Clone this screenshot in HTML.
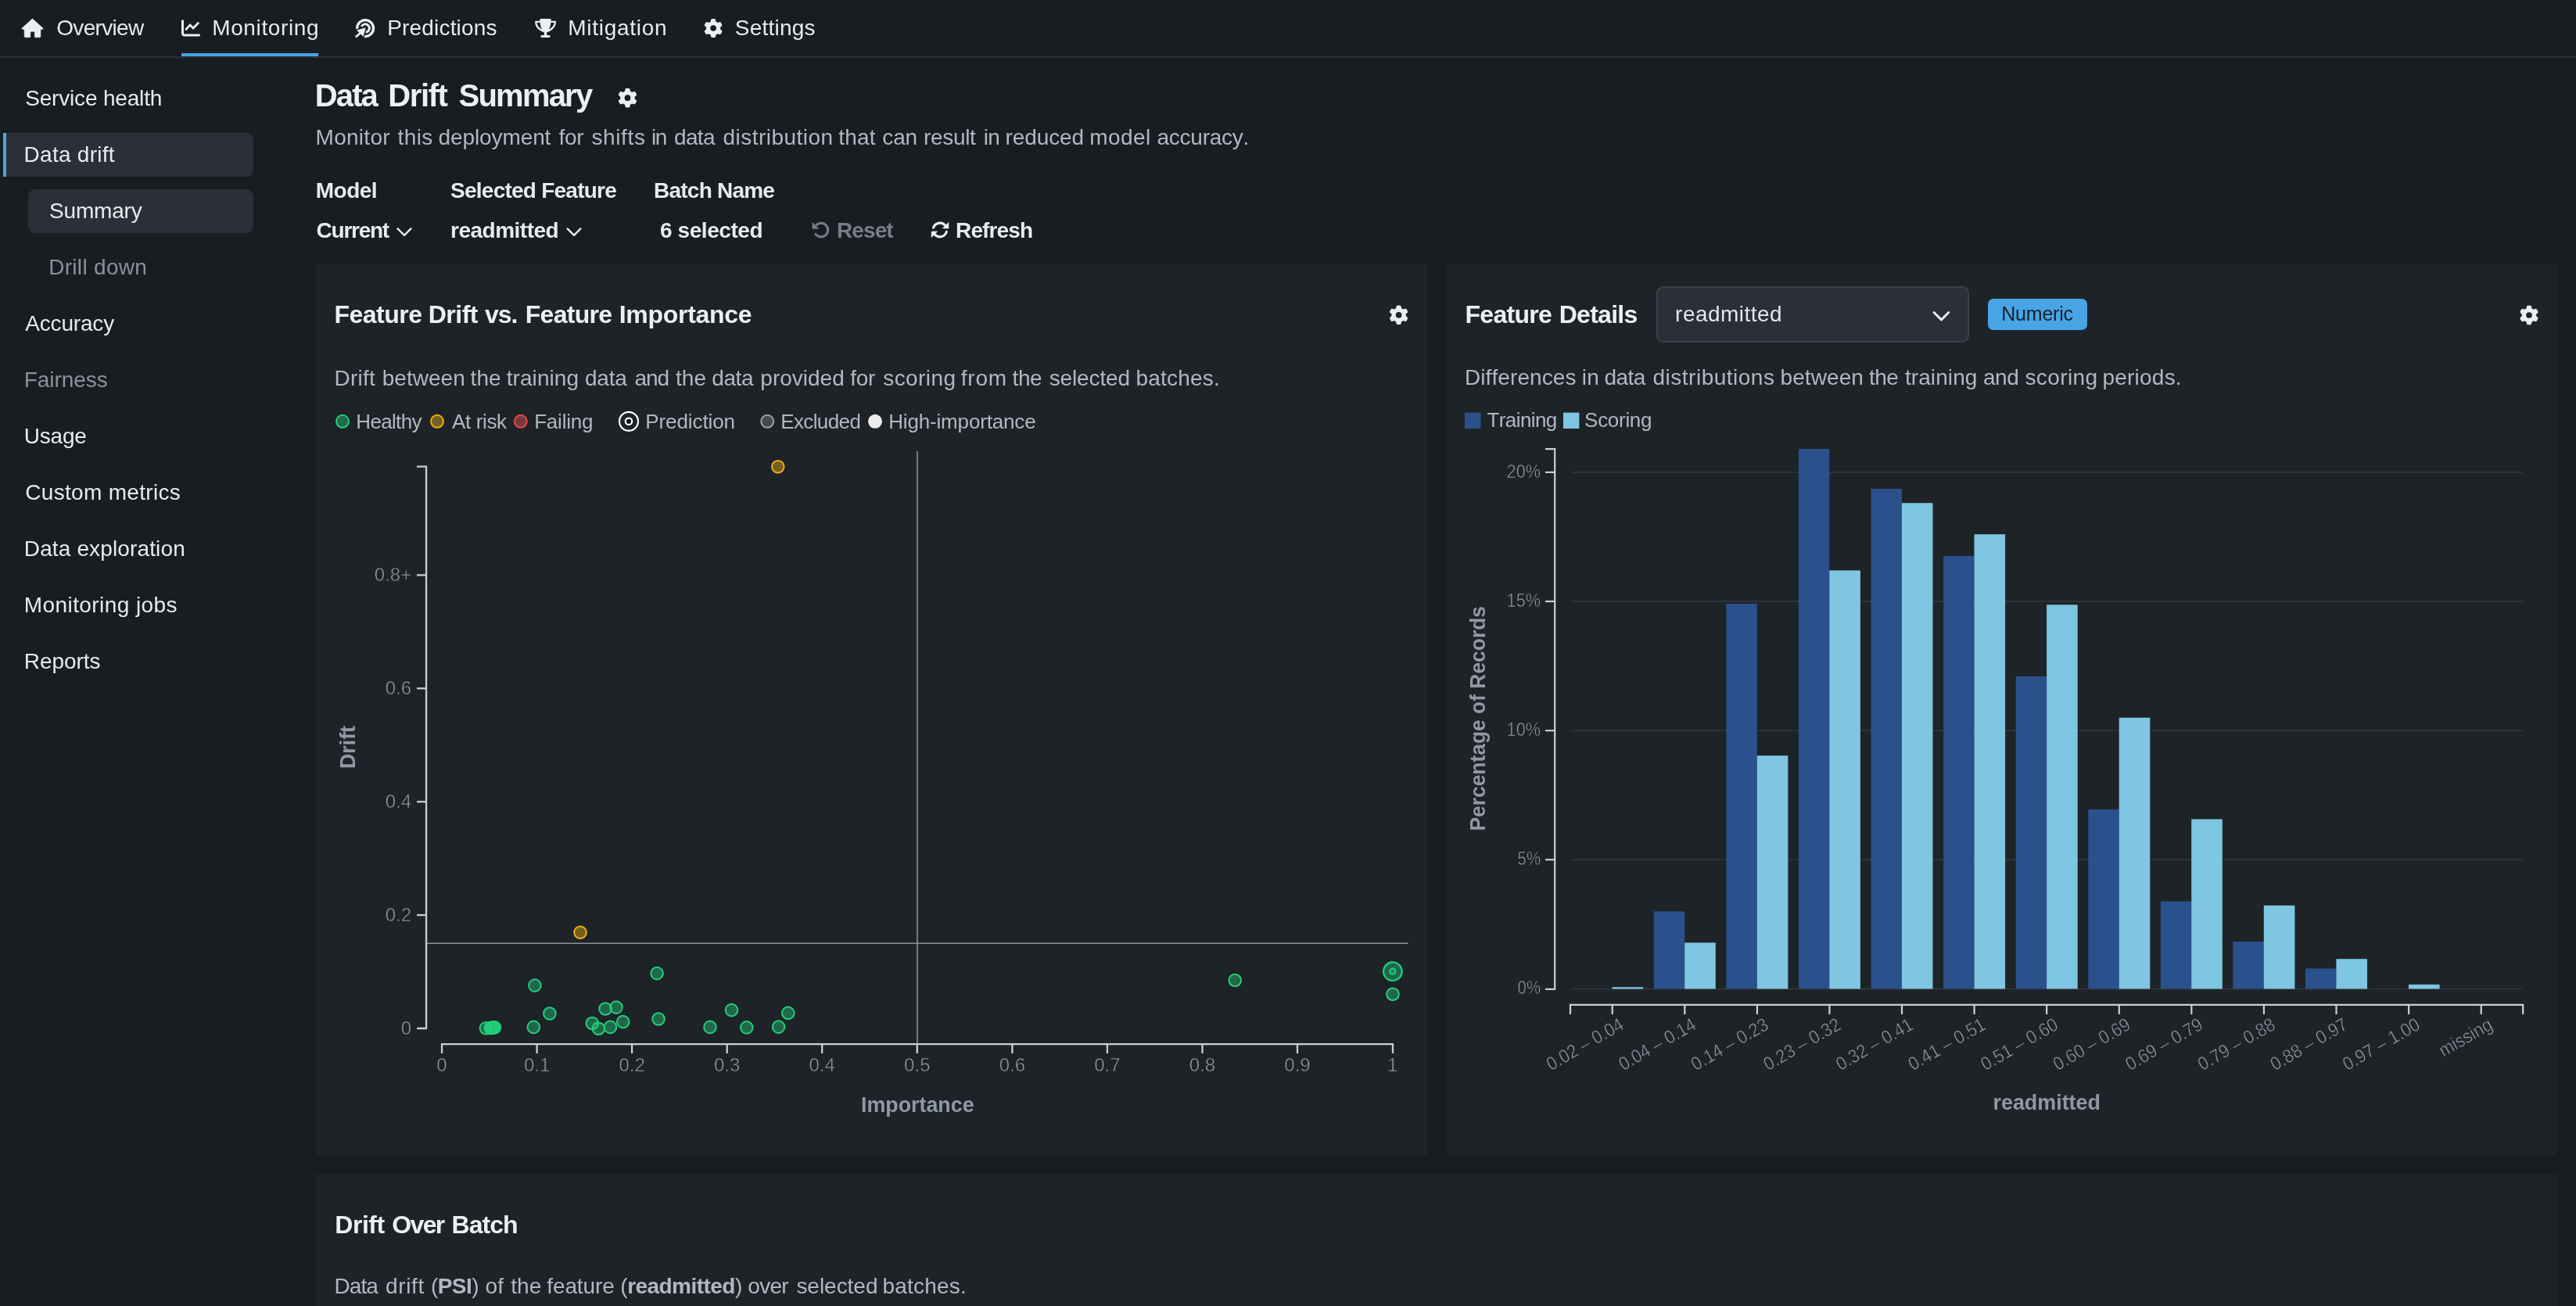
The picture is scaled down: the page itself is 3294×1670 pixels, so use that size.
<!DOCTYPE html>
<html lang="en">
<head>
<meta charset="utf-8">
<title>Data Drift Summary</title>
<style>
html,body{margin:0;padding:0;background:#181d21;}
body{width:3294px;height:1670px;overflow:hidden;position:relative;font-family:"Liberation Sans", sans-serif;}
.t{position:absolute;white-space:nowrap;line-height:1;font-kerning:none;}
.t b{font-weight:700;}
.ln{margin:0;padding:0;font-size:inherit;font-weight:inherit;}
nav,aside,main,section,header{position:absolute;display:block;left:0;top:0;}
nav,aside,main{will-change:transform;}
nav{left:0;top:0;width:3294px;height:72px;border-bottom:2px solid #2b3039;}
.underline{position:absolute;left:232px;top:68px;width:175px;height:4.4px;background:#4aa3e4;}
.sel1{position:absolute;left:8px;top:170px;width:316px;height:56px;background:#2a2f38;border-radius:0 9px 9px 0;}
.selbar{position:absolute;left:4px;top:170px;width:4.4px;height:56px;background:#4aa3e4;}
.sel2{position:absolute;left:36px;top:242px;width:288px;height:56px;background:#2a2f38;border-radius:9px;}
.panel{position:absolute;background:#1e2327;}
#p1{left:404px;top:337px;width:1420.6px;height:1140px;}
#p2{left:1849px;top:337px;width:1421px;height:1140px;}
#p3{left:404px;top:1501px;width:2866px;height:200px;}
.select{position:absolute;left:2117.6px;top:366.2px;width:396px;height:67.6px;border:2px solid #3b414b;border-radius:9px;background:#2a2f38;}
.badge{position:absolute;left:2541.6px;top:382px;width:127.4px;height:39.8px;border-radius:7px;background:#47a5e6;}
svg{position:absolute;left:0;top:0;overflow:visible;}
svg text{font-family:"Liberation Sans", sans-serif;}
.tk{font-size:24px;fill:#9299a4;stroke:#1e2327;stroke-width:0.55px;}
.axl{font-size:28px;font-weight:700;fill:#9198a5;}
</style>
</head>
<body>
<nav>
<div class="underline"></div>
<span id="t0" class="t" style="left:72.20px;top:21.8px;font-size:28px;color:#e8eaed;letter-spacing:-0.663px">Overview</span>
<span id="t1" class="t" style="left:271.20px;top:21.8px;font-size:28px;color:#e8eaed;letter-spacing:0.627px">Monitoring</span>
<span id="t2" class="t" style="left:495.15px;top:21.8px;font-size:28px;color:#e8eaed;letter-spacing:0.187px">Predictions</span>
<span id="t3" class="t" style="left:726.20px;top:21.8px;font-size:28px;color:#e8eaed;letter-spacing:0.736px">Mitigation</span>
<span id="t4" class="t" style="left:939.72px;top:21.8px;font-size:28px;color:#e8eaed;letter-spacing:0.236px">Settings</span>
</nav>
<aside>
<div class="selbar"></div><div class="sel1"></div><div class="sel2"></div>
<span id="t5" class="t" style="left:32.20px;top:111.8px;font-size:28px;color:#e8eaed;letter-spacing:-0.177px">Service health</span>
<span id="t6" class="t" style="left:30.58px;top:183.8px;font-size:28px;color:#e8eaed;letter-spacing:0.259px">Data drift</span>
<span id="t7" class="t" style="left:63.10px;top:255.8px;font-size:28px;color:#e8eaed;letter-spacing:-0.200px">Summary</span>
<span id="t8" class="t" style="left:62.20px;top:327.8px;font-size:28px;color:#8b919c;letter-spacing:0.306px">Drill down</span>
<span id="t9" class="t" style="left:32.30px;top:399.8px;font-size:28px;color:#e8eaed;letter-spacing:-0.182px">Accuracy</span>
<span id="t10" class="t" style="left:30.77px;top:471.8px;font-size:28px;color:#8b919c;letter-spacing:-0.063px">Fairness</span>
<span id="t11" class="t" style="left:30.77px;top:543.8px;font-size:28px;color:#e8eaed;letter-spacing:-0.210px">Usage</span>
<span id="t12" class="t" style="left:32.30px;top:615.8px;font-size:28px;color:#e8eaed;letter-spacing:0.305px">Custom metrics</span>
<span id="t13" class="t" style="left:30.77px;top:687.8px;font-size:28px;color:#e8eaed;letter-spacing:0.139px">Data exploration</span>
<span id="t14" class="t" style="left:30.77px;top:759.8px;font-size:28px;color:#e8eaed;letter-spacing:0.421px">Monitoring jobs</span>
<span id="t15" class="t" style="left:30.77px;top:831.8px;font-size:28px;color:#e8eaed;letter-spacing:-0.051px">Reports</span>
</aside>
<main>
<header>
<h1 class="ln" id="ln-h1">
<span id="t16" class="t" style="left:402.86px;top:101.6px;font-size:40px;color:#eeeff1;letter-spacing:-1.926px;font-weight:700">Data</span>
<span id="t17" class="t" style="left:496.20px;top:101.6px;font-size:40px;color:#eeeff1;letter-spacing:-1.364px;font-weight:700">Drift</span>
<span id="t18" class="t" style="left:586.60px;top:101.6px;font-size:40px;color:#eeeff1;letter-spacing:-1.795px;font-weight:700">Summary</span>
</h1>
<p class="ln" id="ln-sub">
<span id="t19" class="t" style="left:403.58px;top:162.3px;font-size:28px;color:#b1b8c3;letter-spacing:0.276px">Monitor</span>
<span id="t20" class="t" style="left:508.50px;top:162.3px;font-size:28px;color:#b1b8c3;letter-spacing:0.430px">this</span>
<span id="t21" class="t" style="left:560.53px;top:162.3px;font-size:28px;color:#b1b8c3;letter-spacing:-0.097px">deployment</span>
<span id="t22" class="t" style="left:714.50px;top:162.3px;font-size:28px;color:#b1b8c3;letter-spacing:-0.329px">for</span>
<span id="t23" class="t" style="left:756.40px;top:162.3px;font-size:28px;color:#b1b8c3;letter-spacing:0.627px">shifts</span>
<span id="t24" class="t" style="left:833.10px;top:162.3px;font-size:28px;color:#b1b8c3;letter-spacing:-1.498px">in</span>
<span id="t25" class="t" style="left:861.91px;top:162.3px;font-size:28px;color:#b1b8c3;letter-spacing:-0.600px">data</span>
<span id="t26" class="t" style="left:924.50px;top:162.3px;font-size:28px;color:#b1b8c3;letter-spacing:0.463px">distribution</span>
<span id="t27" class="t" style="left:1072.20px;top:162.3px;font-size:28px;color:#b1b8c3;letter-spacing:0.174px">that</span>
<span id="t28" class="t" style="left:1128.29px;top:162.3px;font-size:28px;color:#b1b8c3;letter-spacing:-0.132px">can</span>
<span id="t29" class="t" style="left:1180.91px;top:162.3px;font-size:28px;color:#b1b8c3;letter-spacing:-0.295px">result</span>
<span id="t30" class="t" style="left:1257.72px;top:162.3px;font-size:28px;color:#b1b8c3;letter-spacing:-0.578px">in</span>
<span id="t31" class="t" style="left:1285.58px;top:162.3px;font-size:28px;color:#b1b8c3;letter-spacing:-0.123px">reduced</span>
<span id="t32" class="t" style="left:1393.20px;top:162.3px;font-size:28px;color:#b1b8c3;letter-spacing:0.422px">model</span>
<span id="t33" class="t" style="left:1479.50px;top:162.3px;font-size:28px;color:#b1b8c3;letter-spacing:-0.244px">accuracy.</span>
</p>
<span id="t34" class="t" style="left:403.72px;top:230.3px;font-size:28px;color:#e8eaed;letter-spacing:-0.498px;font-weight:700">Model</span>
<span id="t35" class="t" style="left:576.10px;top:230.3px;font-size:28px;color:#e8eaed;letter-spacing:-0.759px;font-weight:700">Selected Feature</span>
<span id="t36" class="t" style="left:836.10px;top:230.3px;font-size:28px;color:#e8eaed;letter-spacing:-0.784px;font-weight:700">Batch Name</span>
<span id="t37" class="t" style="left:404.60px;top:280.6px;font-size:28px;color:#e8eaed;letter-spacing:-1.252px;font-weight:700">Current</span>
<span id="t38" class="t" style="left:576.10px;top:280.9px;font-size:28px;color:#e8eaed;letter-spacing:-0.516px;font-weight:700">readmitted</span>
<span id="t39" class="t" style="left:844.10px;top:280.6px;font-size:28px;color:#e8eaed;letter-spacing:-0.442px;font-weight:700">6 selected</span>
<span id="t40" class="t" style="left:1070.01px;top:280.6px;font-size:28px;color:#767d89;letter-spacing:-0.901px;font-weight:700">Reset</span>
<span id="t41" class="t" style="left:1222.10px;top:280.6px;font-size:28px;color:#e8eaed;letter-spacing:-0.888px;font-weight:700">Refresh</span>
</header>
<section class="panel" id="p1"></section>
<section class="panel" id="p2"></section>
<section class="panel" id="p3"></section>
<div class="select"></div>
<div class="badge"></div>
<svg width="3294" height="1670" viewBox="0 0 3294 1670">
<g id="scatter">
<line x1="546" y1="1206.2" x2="1800.7" y2="1206.2" stroke="#8d929a" stroke-width="1.6"/>
<line x1="1173" y1="577" x2="1173" y2="1334" stroke="#8d929a" stroke-width="1.6"/>
<path d="M533 596.6 L545.05 596.6 L545.05 1315 L533 1315" fill="none" stroke="#c9cfd9" stroke-width="2.3"/>
<line x1="533" y1="735.4" x2="545.05" y2="735.4" stroke="#c9cfd9" stroke-width="2.3"/>
<text x="526.2" y="743.4" text-anchor="end" class="tk">0.8+</text>
<line x1="533" y1="880.3" x2="545.05" y2="880.3" stroke="#c9cfd9" stroke-width="2.3"/>
<text x="526.2" y="888.3" text-anchor="end" class="tk">0.6</text>
<line x1="533" y1="1025.2" x2="545.05" y2="1025.2" stroke="#c9cfd9" stroke-width="2.3"/>
<text x="526.2" y="1033.2" text-anchor="end" class="tk">0.4</text>
<line x1="533" y1="1170.1" x2="545.05" y2="1170.1" stroke="#c9cfd9" stroke-width="2.3"/>
<text x="526.2" y="1178.1" text-anchor="end" class="tk">0.2</text>
<text x="526.2" y="1323.0" text-anchor="end" class="tk">0</text>
<path d="M565.05 1347 L565.05 1335.05 L1781 1335.05 L1781 1347" fill="none" stroke="#c9cfd9" stroke-width="2.3"/>
<text x="565.0" y="1370.1" text-anchor="middle" class="tk">0</text>
<line x1="686.6" y1="1335" x2="686.6" y2="1347" stroke="#c9cfd9" stroke-width="2.3"/>
<text x="686.6" y="1370.1" text-anchor="middle" class="tk">0.1</text>
<line x1="808.1" y1="1335" x2="808.1" y2="1347" stroke="#c9cfd9" stroke-width="2.3"/>
<text x="808.1" y="1370.1" text-anchor="middle" class="tk">0.2</text>
<line x1="929.7" y1="1335" x2="929.7" y2="1347" stroke="#c9cfd9" stroke-width="2.3"/>
<text x="929.7" y="1370.1" text-anchor="middle" class="tk">0.3</text>
<line x1="1051.2" y1="1335" x2="1051.2" y2="1347" stroke="#c9cfd9" stroke-width="2.3"/>
<text x="1051.2" y="1370.1" text-anchor="middle" class="tk">0.4</text>
<line x1="1172.8" y1="1335" x2="1172.8" y2="1347" stroke="#c9cfd9" stroke-width="2.3"/>
<text x="1172.8" y="1370.1" text-anchor="middle" class="tk">0.5</text>
<line x1="1294.4" y1="1335" x2="1294.4" y2="1347" stroke="#c9cfd9" stroke-width="2.3"/>
<text x="1294.4" y="1370.1" text-anchor="middle" class="tk">0.6</text>
<line x1="1415.9" y1="1335" x2="1415.9" y2="1347" stroke="#c9cfd9" stroke-width="2.3"/>
<text x="1415.9" y="1370.1" text-anchor="middle" class="tk">0.7</text>
<line x1="1537.5" y1="1335" x2="1537.5" y2="1347" stroke="#c9cfd9" stroke-width="2.3"/>
<text x="1537.5" y="1370.1" text-anchor="middle" class="tk">0.8</text>
<line x1="1659.0" y1="1335" x2="1659.0" y2="1347" stroke="#c9cfd9" stroke-width="2.3"/>
<text x="1659.0" y="1370.1" text-anchor="middle" class="tk">0.9</text>
<text x="1780.6" y="1370.1" text-anchor="middle" class="tk">1</text>
<text x="1173.3" y="1421.9" text-anchor="middle" class="axl" textLength="144.6" lengthAdjust="spacingAndGlyphs">Importance</text>
<text transform="translate(454.1 955.5) rotate(-90)" text-anchor="middle" class="axl" textLength="55" lengthAdjust="spacingAndGlyphs">Drift</text>
<circle cx="621.4" cy="1314.8" r="7.8" fill="#22cf7c" fill-opacity="0.41" stroke="#22cf7c" stroke-width="2"/>
<circle cx="627.2" cy="1314.6" r="7.8" fill="#22cf7c" fill-opacity="0.41" stroke="#22cf7c" stroke-width="2"/>
<circle cx="628.6" cy="1314.4" r="7.8" fill="#22cf7c" fill-opacity="0.41" stroke="#22cf7c" stroke-width="2"/>
<circle cx="630.0" cy="1314.2" r="7.8" fill="#22cf7c" fill-opacity="0.41" stroke="#22cf7c" stroke-width="2"/>
<circle cx="631.2" cy="1314.0" r="7.8" fill="#22cf7c" fill-opacity="0.41" stroke="#22cf7c" stroke-width="2"/>
<circle cx="632.5" cy="1313.8" r="7.8" fill="#22cf7c" fill-opacity="0.41" stroke="#22cf7c" stroke-width="2"/>
<circle cx="683.9" cy="1260.1" r="7.8" fill="#22cf7c" fill-opacity="0.41" stroke="#22cf7c" stroke-width="2"/>
<circle cx="702.9" cy="1296" r="7.8" fill="#22cf7c" fill-opacity="0.41" stroke="#22cf7c" stroke-width="2"/>
<circle cx="682.3" cy="1313.4" r="7.8" fill="#22cf7c" fill-opacity="0.41" stroke="#22cf7c" stroke-width="2"/>
<circle cx="757.3" cy="1308.5" r="7.8" fill="#22cf7c" fill-opacity="0.41" stroke="#22cf7c" stroke-width="2"/>
<circle cx="765.4" cy="1315.3" r="7.8" fill="#22cf7c" fill-opacity="0.41" stroke="#22cf7c" stroke-width="2"/>
<circle cx="780.4" cy="1313.4" r="7.8" fill="#22cf7c" fill-opacity="0.41" stroke="#22cf7c" stroke-width="2"/>
<circle cx="796.7" cy="1306.6" r="7.8" fill="#22cf7c" fill-opacity="0.41" stroke="#22cf7c" stroke-width="2"/>
<circle cx="774.1" cy="1290" r="7.8" fill="#22cf7c" fill-opacity="0.41" stroke="#22cf7c" stroke-width="2"/>
<circle cx="788" cy="1288.1" r="7.8" fill="#22cf7c" fill-opacity="0.41" stroke="#22cf7c" stroke-width="2"/>
<circle cx="840.1" cy="1244.6" r="7.8" fill="#22cf7c" fill-opacity="0.41" stroke="#22cf7c" stroke-width="2"/>
<circle cx="842" cy="1303" r="7.8" fill="#22cf7c" fill-opacity="0.41" stroke="#22cf7c" stroke-width="2"/>
<circle cx="908" cy="1313.4" r="7.8" fill="#22cf7c" fill-opacity="0.41" stroke="#22cf7c" stroke-width="2"/>
<circle cx="935.5" cy="1291.6" r="7.8" fill="#22cf7c" fill-opacity="0.41" stroke="#22cf7c" stroke-width="2"/>
<circle cx="954.8" cy="1313.9" r="7.8" fill="#22cf7c" fill-opacity="0.41" stroke="#22cf7c" stroke-width="2"/>
<circle cx="995.6" cy="1313.1" r="7.8" fill="#22cf7c" fill-opacity="0.41" stroke="#22cf7c" stroke-width="2"/>
<circle cx="1007.8" cy="1295.4" r="7.8" fill="#22cf7c" fill-opacity="0.41" stroke="#22cf7c" stroke-width="2"/>
<circle cx="1579.2" cy="1253.5" r="7.8" fill="#22cf7c" fill-opacity="0.41" stroke="#22cf7c" stroke-width="2"/>
<circle cx="1781" cy="1271.3" r="7.8" fill="#22cf7c" fill-opacity="0.41" stroke="#22cf7c" stroke-width="2"/>
<circle cx="1780.9" cy="1242.2" r="11.8" fill="#22cf7c" fill-opacity="0.41" stroke="#22cf7c" stroke-width="2.2"/>
<circle cx="1780.9" cy="1242.2" r="3.6" fill="#22cf7c" fill-opacity="0.3" stroke="#22cf7c" stroke-width="2"/>
<circle cx="994.8" cy="596.7" r="7.8" fill="#e9ae12" fill-opacity="0.43" stroke="#e9ae12" stroke-width="2"/>
<circle cx="742" cy="1192.2" r="7.8" fill="#e9ae12" fill-opacity="0.43" stroke="#e9ae12" stroke-width="2"/>
<circle cx="438" cy="538.8" r="8" fill="#226a49" stroke="#22cf7c" stroke-width="2"/>
<circle cx="559" cy="538.8" r="8" fill="#75601f" stroke="#e9ae12" stroke-width="2"/>
<circle cx="665.8" cy="538.8" r="8" fill="#7a3a3f" stroke="#e5484d" stroke-width="2"/>
<circle cx="804" cy="538.8" r="12" fill="none" stroke="#ffffff" stroke-width="2.2"/>
<circle cx="804" cy="538.8" r="4.2" fill="#08090a" stroke="#ffffff" stroke-width="2.2"/>
<circle cx="981.2" cy="538.8" r="8" fill="#45494e" stroke="#9da2a9" stroke-width="2"/>
<circle cx="1119" cy="538.8" r="9" fill="#ececec"/>
</g>
<g id="hist">
<line x1="2008" y1="1264.5" x2="3226" y2="1264.5" stroke="#2e333a" stroke-width="2"/>
<line x1="2008" y1="1099.3" x2="3226" y2="1099.3" stroke="#2e333a" stroke-width="2"/>
<line x1="2008" y1="934.2" x2="3226" y2="934.2" stroke="#2e333a" stroke-width="2"/>
<line x1="2008" y1="769.0" x2="3226" y2="769.0" stroke="#2e333a" stroke-width="2"/>
<line x1="2008" y1="603.9" x2="3226" y2="603.9" stroke="#2e333a" stroke-width="2"/>
<rect x="2061.6" y="1262.2" width="39.6" height="2.3" fill="#7ec6e1"/>
<rect x="2114.8" y="1165.4" width="39.4" height="99.1" fill="#2a518c"/>
<rect x="2154.2" y="1205.4" width="39.6" height="59.1" fill="#7ec6e1"/>
<rect x="2207.4" y="772.0" width="39.4" height="492.5" fill="#2a518c"/>
<rect x="2246.8" y="966.2" width="39.6" height="298.3" fill="#7ec6e1"/>
<rect x="2299.9" y="574.0" width="39.4" height="690.5" fill="#2a518c"/>
<rect x="2339.3" y="729.4" width="39.6" height="535.1" fill="#7ec6e1"/>
<rect x="2392.5" y="625.0" width="39.4" height="639.5" fill="#2a518c"/>
<rect x="2431.9" y="643.2" width="39.6" height="621.3" fill="#7ec6e1"/>
<rect x="2485.1" y="710.9" width="39.4" height="553.6" fill="#2a518c"/>
<rect x="2524.5" y="683.2" width="39.6" height="581.3" fill="#7ec6e1"/>
<rect x="2577.7" y="864.8" width="39.4" height="399.7" fill="#2a518c"/>
<rect x="2617.1" y="773.3" width="39.6" height="491.2" fill="#7ec6e1"/>
<rect x="2670.3" y="1034.9" width="39.4" height="229.6" fill="#2a518c"/>
<rect x="2709.7" y="917.7" width="39.6" height="346.8" fill="#7ec6e1"/>
<rect x="2762.8" y="1152.5" width="39.4" height="112.0" fill="#2a518c"/>
<rect x="2802.2" y="1047.5" width="39.6" height="217.0" fill="#7ec6e1"/>
<rect x="2855.4" y="1204.1" width="39.4" height="60.4" fill="#2a518c"/>
<rect x="2894.8" y="1157.8" width="39.6" height="106.7" fill="#7ec6e1"/>
<rect x="2948.0" y="1238.4" width="39.4" height="26.1" fill="#2a518c"/>
<rect x="2987.4" y="1226.2" width="39.6" height="38.3" fill="#7ec6e1"/>
<rect x="3080.0" y="1258.9" width="39.6" height="5.6" fill="#7ec6e1"/>
<path d="M1976 574.2 L1988.2 574.2 L1988.2 1264.8 L1976 1264.8" fill="none" stroke="#c9cfd9" stroke-width="2.2"/>
<line x1="1976" y1="1099.3" x2="1988.2" y2="1099.3" stroke="#c9cfd9" stroke-width="2.2"/>
<text x="1970" y="1106.1" text-anchor="end" class="tk" textLength="29.4" lengthAdjust="spacingAndGlyphs">5%</text>
<line x1="1976" y1="934.2" x2="1988.2" y2="934.2" stroke="#c9cfd9" stroke-width="2.2"/>
<text x="1970" y="941.0" text-anchor="end" class="tk" textLength="43.4" lengthAdjust="spacingAndGlyphs">10%</text>
<line x1="1976" y1="769.0" x2="1988.2" y2="769.0" stroke="#c9cfd9" stroke-width="2.2"/>
<text x="1970" y="775.8" text-anchor="end" class="tk" textLength="43.4" lengthAdjust="spacingAndGlyphs">15%</text>
<line x1="1976" y1="603.9" x2="1988.2" y2="603.9" stroke="#c9cfd9" stroke-width="2.2"/>
<text x="1970" y="610.7" text-anchor="end" class="tk" textLength="43.4" lengthAdjust="spacingAndGlyphs">20%</text>
<text x="1970" y="1271.3" text-anchor="end" class="tk" textLength="29.4" lengthAdjust="spacingAndGlyphs">0%</text>
<path d="M2008 1297 L2008 1284.8 L3226.2 1284.8 L3226.2 1297" fill="none" stroke="#c9cfd9" stroke-width="2.2"/>
<line x1="2061.7" y1="1284.8" x2="2061.7" y2="1297" stroke="#c9cfd9" stroke-width="2.2"/>
<text transform="translate(2078.0 1314.8) rotate(-30)" text-anchor="end" class="tk" textLength="109.5" lengthAdjust="spacingAndGlyphs">0.02 – 0.04</text>
<line x1="2154.3" y1="1284.8" x2="2154.3" y2="1297" stroke="#c9cfd9" stroke-width="2.2"/>
<text transform="translate(2170.6 1314.8) rotate(-30)" text-anchor="end" class="tk" textLength="109.5" lengthAdjust="spacingAndGlyphs">0.04 – 0.14</text>
<line x1="2246.9" y1="1284.8" x2="2246.9" y2="1297" stroke="#c9cfd9" stroke-width="2.2"/>
<text transform="translate(2263.2 1314.8) rotate(-30)" text-anchor="end" class="tk" textLength="109.5" lengthAdjust="spacingAndGlyphs">0.14 – 0.23</text>
<line x1="2339.4" y1="1284.8" x2="2339.4" y2="1297" stroke="#c9cfd9" stroke-width="2.2"/>
<text transform="translate(2355.7 1314.8) rotate(-30)" text-anchor="end" class="tk" textLength="109.5" lengthAdjust="spacingAndGlyphs">0.23 – 0.32</text>
<line x1="2432.0" y1="1284.8" x2="2432.0" y2="1297" stroke="#c9cfd9" stroke-width="2.2"/>
<text transform="translate(2448.3 1314.8) rotate(-30)" text-anchor="end" class="tk" textLength="109.5" lengthAdjust="spacingAndGlyphs">0.32 – 0.41</text>
<line x1="2524.6" y1="1284.8" x2="2524.6" y2="1297" stroke="#c9cfd9" stroke-width="2.2"/>
<text transform="translate(2540.9 1314.8) rotate(-30)" text-anchor="end" class="tk" textLength="109.5" lengthAdjust="spacingAndGlyphs">0.41 – 0.51</text>
<line x1="2617.2" y1="1284.8" x2="2617.2" y2="1297" stroke="#c9cfd9" stroke-width="2.2"/>
<text transform="translate(2633.5 1314.8) rotate(-30)" text-anchor="end" class="tk" textLength="109.5" lengthAdjust="spacingAndGlyphs">0.51 – 0.60</text>
<line x1="2709.8" y1="1284.8" x2="2709.8" y2="1297" stroke="#c9cfd9" stroke-width="2.2"/>
<text transform="translate(2726.1 1314.8) rotate(-30)" text-anchor="end" class="tk" textLength="109.5" lengthAdjust="spacingAndGlyphs">0.60 – 0.69</text>
<line x1="2802.3" y1="1284.8" x2="2802.3" y2="1297" stroke="#c9cfd9" stroke-width="2.2"/>
<text transform="translate(2818.6 1314.8) rotate(-30)" text-anchor="end" class="tk" textLength="109.5" lengthAdjust="spacingAndGlyphs">0.69 – 0.79</text>
<line x1="2894.9" y1="1284.8" x2="2894.9" y2="1297" stroke="#c9cfd9" stroke-width="2.2"/>
<text transform="translate(2911.2 1314.8) rotate(-30)" text-anchor="end" class="tk" textLength="109.5" lengthAdjust="spacingAndGlyphs">0.79 – 0.88</text>
<line x1="2987.5" y1="1284.8" x2="2987.5" y2="1297" stroke="#c9cfd9" stroke-width="2.2"/>
<text transform="translate(3003.8 1314.8) rotate(-30)" text-anchor="end" class="tk" textLength="109.5" lengthAdjust="spacingAndGlyphs">0.88 – 0.97</text>
<line x1="3080.1" y1="1284.8" x2="3080.1" y2="1297" stroke="#c9cfd9" stroke-width="2.2"/>
<text transform="translate(3096.4 1314.8) rotate(-30)" text-anchor="end" class="tk" textLength="109.5" lengthAdjust="spacingAndGlyphs">0.97 – 1.00</text>
<line x1="3172.7" y1="1284.8" x2="3172.7" y2="1297" stroke="#c9cfd9" stroke-width="2.2"/>
<text transform="translate(3189.0 1314.8) rotate(-30)" text-anchor="end" class="tk" textLength="74.5" lengthAdjust="spacingAndGlyphs">missing</text>
<text x="2617.2" y="1418.9" text-anchor="middle" class="axl" textLength="137.4" lengthAdjust="spacingAndGlyphs">readmitted</text>
<text transform="translate(1899.2 918.8) rotate(-90)" text-anchor="middle" class="axl" textLength="287.6" lengthAdjust="spacingAndGlyphs">Percentage of Records</text>
<rect x="1873" y="527.6" width="20.4" height="20.4" fill="#2a518c"/>
<rect x="1999" y="527.6" width="20.4" height="20.4" fill="#7ec6e1"/>
</g>
<g id="icons">
<path d="M41.5 24.1 L54.9 36 Q55.3 37.4 54 37.4 L51.9 37.4 L51.9 46.2 Q51.9 47.7 50.4 47.7 L45.6 47.7 Q44.4 47.7 44.4 46.5 L44.4 41.4 Q44.4 40.3 43.3 40.3 L39.9 40.3 Q38.8 40.3 38.8 41.4 L38.8 46.5 Q38.8 47.7 37.6 47.7 L32.7 47.7 Q31.2 47.7 31.2 46.2 L31.2 37.4 L29 37.4 Q27.7 37.4 28.100 36Z" fill="#eceef0" stroke="#eceef0" stroke-width="0.7" stroke-linejoin="round"/>
<path d="M233.500 26.8 L233.5 42.2 Q233.5 44.9 236.2 44.9 L254.5 44.9" fill="none" stroke="#eceef0" stroke-width="3.05" stroke-linecap="round"/>
<path d="M238 37.400 L243 32.100 L247 36.1 L253.4 29.6" fill="none" stroke="#eceef0" stroke-width="2.8" stroke-linecap="round" stroke-linejoin="miter"/>
<path d="M456.68 36.83 A10.45 10.45 0 1 1 465.47 46.42" fill="none" stroke="#eceef0" stroke-width="3.3"/>
<path d="M462.30 33.96 A5.25 5.25 0 1 1 467.65 41.32" fill="none" stroke="#eceef0" stroke-width="3.0"/>
<path d="M467.2 35.900 L456.600 38.8 L464.3 46.3Z" fill="#181d21" stroke="#181d21" stroke-width="3.4" stroke-linejoin="round"/>
<path d="M455.6 46.700 L461.8 41.3" fill="none" stroke="#eceef0" stroke-width="2.7" stroke-linecap="round"/>
<path d="M467.2 35.900 L456.600 38.8 L464.3 46.3Z" fill="#eceef0" stroke="#eceef0" stroke-width="0.8" stroke-linejoin="round"/>
<path d="M691.4 24.1 L703.6 24.1 Q704.8 24.1 704.7 25.4 Q704.4 33 702.2 37.4 Q700.9 40 699.2 40.8 L699.2 45.100 L702.4 45.1 Q703.5 45.1 703.5 46.2 L703.5 46.8 Q703.5 47.9 702.4 47.9 L692.6 47.9 Q691.5 47.9 691.5 46.8 L691.5 46.2 Q691.5 45.1 692.6 45.1 L695.8 45.1 L695.8 40.8 Q694.1 40 692.8 37.4 Q690.6 33 690.3 25.4 Q690.2 24.1 691.4 24.1Z" fill="#eceef0"/>
<path d="M690.8 27.8 L685.2 27.8 Q685 35.800 695.6 40.4" fill="none" stroke="#eceef0" stroke-width="2.3" stroke-linejoin="round"/>
<path d="M704.2 27.8 L709.900 27.8 Q710.1 35.8 699.4 40.4" fill="none" stroke="#eceef0" stroke-width="2.3" stroke-linejoin="round"/>
<path transform="translate(900.10 24.10) scale(0.04688)" d="M495.9 166.6c3.2 8.7 .5 18.4-6.4 24.6l-43.3 39.4c1.1 8.3 1.7 16.8 1.7 25.4s-.6 17.1-1.7 25.4l43.3 39.4c6.9 6.2 9.6 15.9 6.4 24.6c-4.4 11.9-9.700 23.3-15.8 34.3l-4.7 8.1c-6.6 11-14 21.4-22.1 31.2c-5.9 7.2-15.7 9.6-24.5 6.8l-55.7-17.7c-13.4 10.3-28.2 18.9-44 25.4l-12.5 57.1c-2 9.1-9 16.3-18.2 17.8c-13.8 2.3-28 3.5-42.5 3.5s-28.7-1.2-42.5-3.5c-9.2-1.5-16.2-8.7-18.2-17.8l-12.500-57.1c-15.8-6.5-30.6-15.1-44-25.4L83.1 425.9c-8.8 2.8-18.6 .3-24.5-6.8c-8.1-9.8-15.5-20.2-22.1-31.2l-4.7-8.1c-6.1-11-11.4-22.4-15.8-34.3c-3.2-8.7-.5-18.4 6.4-24.6l43.3-39.4C64.6 273.1 64 264.6 64 256s.6-17.1 1.7-25.4L22.4 191.2c-6.900-6.2-9.6-15.9-6.4-24.6c4.4-11.9 9.700-23.3 15.800-34.3l4.7-8.1c6.6-11 14-21.4 22.1-31.2c5.9-7.2 15.7-9.6 24.5-6.8l55.7 17.7c13.4-10.300 28.2-18.9 44-25.4l12.5-57.1c2-9.1 9-16.3 18.2-17.8C227.3 1.2 241.500 0 256 0s28.700 1.2 42.5 3.5c9.200 1.5 16.2 8.7 18.2 17.8l12.500 57.1c15.8 6.500 30.6 15.1 44 25.4l55.7-17.7c8.8-2.8 18.6-.3 24.500 6.800c8.100 9.800 15.500 20.200 22.100 31.200l4.700 8.100c6.100 11 11.400 22.400 15.800 34.300zM256 336a80 80 0 1 0 0-160 80 80 0 1 0 0 160z" fill="#eceef0"/>
<path transform="translate(790.20 112.90) scale(0.04805)" d="M495.9 166.6c3.2 8.7 .5 18.4-6.4 24.6l-43.3 39.4c1.1 8.3 1.7 16.8 1.7 25.4s-.6 17.1-1.7 25.4l43.3 39.4c6.9 6.2 9.6 15.9 6.4 24.6c-4.4 11.9-9.700 23.3-15.8 34.3l-4.7 8.1c-6.6 11-14 21.4-22.1 31.2c-5.9 7.2-15.7 9.6-24.5 6.8l-55.7-17.7c-13.4 10.3-28.2 18.9-44 25.4l-12.5 57.1c-2 9.1-9 16.3-18.2 17.8c-13.8 2.3-28 3.5-42.5 3.5s-28.7-1.2-42.5-3.5c-9.2-1.5-16.2-8.7-18.2-17.8l-12.500-57.1c-15.8-6.5-30.6-15.1-44-25.4L83.1 425.9c-8.8 2.8-18.6 .3-24.5-6.8c-8.1-9.8-15.5-20.2-22.1-31.2l-4.7-8.1c-6.1-11-11.4-22.4-15.8-34.3c-3.2-8.7-.5-18.4 6.4-24.6l43.3-39.4C64.6 273.1 64 264.6 64 256s.6-17.1 1.7-25.4L22.4 191.2c-6.900-6.2-9.6-15.9-6.4-24.6c4.4-11.9 9.700-23.3 15.800-34.3l4.7-8.1c6.6-11 14-21.4 22.1-31.2c5.9-7.2 15.7-9.6 24.5-6.8l55.7 17.7c13.4-10.300 28.2-18.9 44-25.4l12.5-57.1c2-9.1 9-16.3 18.2-17.8C227.3 1.2 241.500 0 256 0s28.700 1.2 42.5 3.5c9.200 1.5 16.2 8.7 18.2 17.8l12.500 57.1c15.8 6.500 30.6 15.1 44 25.4l55.7-17.7c8.8-2.8 18.6-.3 24.500 6.800c8.100 9.800 15.500 20.200 22.100 31.200l4.700 8.100c6.100 11 11.400 22.400 15.800 34.300zM256 336a80 80 0 1 0 0-160 80 80 0 1 0 0 160z" fill="#eceef0"/>
<path transform="translate(1776.30 390.50) scale(0.04805)" d="M495.9 166.6c3.2 8.7 .5 18.4-6.4 24.6l-43.3 39.4c1.1 8.3 1.7 16.8 1.7 25.4s-.6 17.1-1.7 25.4l43.3 39.4c6.9 6.2 9.6 15.9 6.4 24.6c-4.4 11.9-9.700 23.3-15.8 34.3l-4.7 8.1c-6.6 11-14 21.4-22.1 31.2c-5.9 7.2-15.7 9.6-24.5 6.8l-55.7-17.7c-13.4 10.3-28.2 18.9-44 25.4l-12.5 57.1c-2 9.1-9 16.3-18.2 17.8c-13.8 2.3-28 3.5-42.5 3.5s-28.7-1.2-42.5-3.5c-9.2-1.5-16.2-8.7-18.2-17.8l-12.500-57.1c-15.8-6.5-30.6-15.1-44-25.4L83.1 425.9c-8.8 2.8-18.6 .3-24.5-6.8c-8.1-9.8-15.5-20.2-22.1-31.2l-4.7-8.1c-6.1-11-11.4-22.4-15.8-34.3c-3.2-8.7-.5-18.4 6.4-24.6l43.3-39.4C64.6 273.1 64 264.6 64 256s.6-17.1 1.7-25.4L22.4 191.2c-6.900-6.2-9.6-15.9-6.4-24.6c4.4-11.9 9.700-23.3 15.800-34.3l4.7-8.1c6.6-11 14-21.4 22.1-31.2c5.9-7.2 15.7-9.6 24.5-6.8l55.7 17.7c13.4-10.300 28.2-18.9 44-25.4l12.5-57.1c2-9.1 9-16.3 18.2-17.8C227.3 1.2 241.500 0 256 0s28.700 1.2 42.5 3.5c9.200 1.5 16.2 8.7 18.2 17.8l12.500 57.1c15.8 6.500 30.6 15.1 44 25.4l55.7-17.7c8.8-2.8 18.6-.3 24.500 6.800c8.100 9.800 15.500 20.200 22.100 31.200l4.700 8.100c6.100 11 11.400 22.400 15.800 34.300zM256 336a80 80 0 1 0 0-160 80 80 0 1 0 0 160z" fill="#eceef0"/>
<path transform="translate(3221.70 390.70) scale(0.04805)" d="M495.9 166.6c3.2 8.7 .5 18.4-6.4 24.6l-43.3 39.4c1.1 8.3 1.7 16.8 1.7 25.4s-.6 17.1-1.7 25.4l43.3 39.4c6.9 6.2 9.6 15.9 6.4 24.6c-4.4 11.9-9.700 23.3-15.8 34.3l-4.7 8.1c-6.6 11-14 21.4-22.1 31.2c-5.9 7.2-15.7 9.6-24.5 6.8l-55.7-17.7c-13.4 10.3-28.2 18.9-44 25.4l-12.5 57.1c-2 9.1-9 16.3-18.2 17.8c-13.8 2.3-28 3.5-42.5 3.5s-28.7-1.2-42.5-3.5c-9.2-1.5-16.2-8.7-18.2-17.8l-12.500-57.1c-15.8-6.5-30.6-15.1-44-25.4L83.1 425.9c-8.8 2.8-18.6 .3-24.5-6.8c-8.1-9.8-15.5-20.2-22.1-31.2l-4.7-8.1c-6.1-11-11.4-22.4-15.8-34.3c-3.2-8.7-.5-18.4 6.4-24.6l43.3-39.4C64.6 273.1 64 264.6 64 256s.6-17.1 1.7-25.4L22.4 191.2c-6.900-6.2-9.6-15.9-6.4-24.6c4.4-11.9 9.700-23.3 15.800-34.3l4.7-8.1c6.6-11 14-21.4 22.1-31.2c5.9-7.2 15.7-9.6 24.5-6.8l55.7 17.7c13.4-10.300 28.2-18.9 44-25.4l12.5-57.1c2-9.1 9-16.3 18.2-17.8C227.3 1.2 241.500 0 256 0s28.700 1.2 42.5 3.5c9.200 1.5 16.2 8.7 18.2 17.8l12.500 57.1c15.8 6.500 30.6 15.1 44 25.4l55.7-17.7c8.8-2.8 18.6-.3 24.500 6.800c8.100 9.800 15.500 20.200 22.100 31.200l4.700 8.100c6.100 11 11.400 22.400 15.800 34.300zM256 336a80 80 0 1 0 0-160 80 80 0 1 0 0 160z" fill="#eceef0"/>
<path d="M508.6 292.4 L517.0 300.8 L525.4 292.4" fill="none" stroke="#e8eaed" stroke-width="2.4" stroke-linecap="round" stroke-linejoin="round"/>
<path d="M725.6 292.4 L734.0 300.8 L742.4 292.4" fill="none" stroke="#e8eaed" stroke-width="2.4" stroke-linecap="round" stroke-linejoin="round"/>
<path d="M2473.0 399.5 L2482.4 408.9 L2491.8 399.5" fill="none" stroke="#e8eaed" stroke-width="3.0" stroke-linecap="round" stroke-linejoin="round"/>
<path d="M1044.01 287.56 A8.8 8.8 0 1 1 1042.87 299.40" fill="none" stroke="#767d89" stroke-width="3.1" stroke-linecap="round"/>
<path d="M1039 284.600 L1039 292.3 L1046.7 292.3Z" fill="#767d89" stroke="#767d89" stroke-width="0.8" stroke-linejoin="round"/>
<path d="M1193.53 291.28 A8.8 8.8 0 0 1 1208.44 288.11" fill="none" stroke="#eceef0" stroke-width="3.1" stroke-linecap="round"/>
<path d="M1210.36 296.43 A8.8 8.8 0 0 1 1195.36 299.89" fill="none" stroke="#eceef0" stroke-width="3.1" stroke-linecap="round"/>
<path d="M1212.9 284.600 L1212.9 291.9 L1205.6 291.9Z" fill="#eceef0" stroke="#eceef0" stroke-width="0.8" stroke-linejoin="round"/>
<path d="M1191.2 303.400 L1191.2 296.100 L1198.5 296.1Z" fill="#eceef0" stroke="#eceef0" stroke-width="0.8" stroke-linejoin="round"/>
</g>
</svg>
<h2 class="ln" id="ln-h2a">
<span id="t42" class="t" style="left:427.39px;top:385.9px;font-size:32px;color:#eeeff1;letter-spacing:-0.499px;font-weight:700">Feature</span>
<span id="t43" class="t" style="left:547.77px;top:385.9px;font-size:32px;color:#eeeff1;letter-spacing:-0.528px;font-weight:700">Drift</span>
<span id="t44" class="t" style="left:620.00px;top:385.9px;font-size:32px;color:#eeeff1;letter-spacing:-1.061px;font-weight:700">vs.</span>
<span id="t45" class="t" style="left:671.77px;top:385.9px;font-size:32px;color:#eeeff1;letter-spacing:-0.704px;font-weight:700">Feature</span>
<span id="t46" class="t" style="left:791.72px;top:385.9px;font-size:32px;color:#eeeff1;letter-spacing:-0.288px;font-weight:700">Importance</span>
</h2>
<p class="ln" id="ln-d1">
<span id="t47" class="t" style="left:427.58px;top:469.7px;font-size:28px;color:#b1b8c3;letter-spacing:0.244px">Drift</span>
<span id="t48" class="t" style="left:488.72px;top:469.7px;font-size:28px;color:#b1b8c3;letter-spacing:0.036px">between</span>
<span id="t49" class="t" style="left:601.60px;top:469.7px;font-size:28px;color:#b1b8c3;letter-spacing:0.059px">the</span>
<span id="t50" class="t" style="left:647.80px;top:469.7px;font-size:28px;color:#b1b8c3;letter-spacing:0.048px">training</span>
<span id="t51" class="t" style="left:747.91px;top:469.7px;font-size:28px;color:#b1b8c3;letter-spacing:-0.185px">data</span>
<span id="t52" class="t" style="left:811.60px;top:469.7px;font-size:28px;color:#b1b8c3;letter-spacing:-1.106px">and</span>
<span id="t53" class="t" style="left:864.00px;top:469.7px;font-size:28px;color:#b1b8c3;letter-spacing:0.059px">the</span>
<span id="t54" class="t" style="left:910.29px;top:469.7px;font-size:28px;color:#b1b8c3;letter-spacing:-0.425px">data</span>
<span id="t55" class="t" style="left:972.34px;top:469.7px;font-size:28px;color:#b1b8c3;letter-spacing:-0.002px">provided</span>
<span id="t56" class="t" style="left:1087.20px;top:469.7px;font-size:28px;color:#b1b8c3;letter-spacing:-0.263px">for</span>
<span id="t57" class="t" style="left:1129.30px;top:469.7px;font-size:28px;color:#b1b8c3;letter-spacing:0.408px">scoring</span>
<span id="t58" class="t" style="left:1228.80px;top:469.7px;font-size:28px;color:#b1b8c3;letter-spacing:0.740px">from</span>
<span id="t59" class="t" style="left:1294.60px;top:469.7px;font-size:28px;color:#b1b8c3;letter-spacing:-0.446px">the</span>
<span id="t60" class="t" style="left:1341.70px;top:469.7px;font-size:28px;color:#b1b8c3;letter-spacing:-0.133px">selected</span>
<span id="t61" class="t" style="left:1452.53px;top:469.7px;font-size:28px;color:#b1b8c3;letter-spacing:0.204px">batches.</span>
</p>
<span id="t62" class="t" style="left:455.34px;top:526.0px;font-size:26px;color:#b1b8c3;letter-spacing:-0.679px">Healthy</span>
<span id="t63" class="t" style="left:578.00px;top:526.0px;font-size:26px;color:#b1b8c3;letter-spacing:-0.362px">At risk</span>
<span id="t64" class="t" style="left:683.20px;top:526.0px;font-size:26px;color:#b1b8c3;letter-spacing:-0.206px">Failing</span>
<span id="t65" class="t" style="left:825.20px;top:526.0px;font-size:26px;color:#b1b8c3;letter-spacing:-0.083px">Prediction</span>
<span id="t66" class="t" style="left:998.20px;top:526.0px;font-size:26px;color:#b1b8c3;letter-spacing:-0.614px">Excluded</span>
<span id="t67" class="t" style="left:1136.20px;top:526.0px;font-size:26px;color:#b1b8c3;letter-spacing:-0.163px">High-importance</span>
<h2 class="ln" id="ln-h2b">
<span id="t68" class="t" style="left:1873.53px;top:385.9px;font-size:32px;color:#eeeff1;letter-spacing:-0.733px;font-weight:700">Feature</span>
<span id="t69" class="t" style="left:1993.72px;top:385.9px;font-size:32px;color:#eeeff1;letter-spacing:-0.724px;font-weight:700">Details</span>
</h2>
<span id="t70" class="t" style="left:2142.10px;top:388.3px;font-size:28px;color:#e3e5e9;letter-spacing:0.470px">readmitted</span>
<span id="t71" class="t" style="left:2559.20px;top:389.3px;font-size:25px;color:#16202b;letter-spacing:-0.195px">Numeric</span>
<p class="ln" id="ln-d2">
<span id="t72" class="t" style="left:1872.96px;top:469.0px;font-size:28px;color:#b1b8c3;letter-spacing:0.095px">Differences</span>
<span id="t73" class="t" style="left:2022.77px;top:469.0px;font-size:28px;color:#b1b8c3;letter-spacing:0.262px">in</span>
<span id="t74" class="t" style="left:2051.53px;top:469.0px;font-size:28px;color:#b1b8c3;letter-spacing:-0.545px">data</span>
<span id="t75" class="t" style="left:2113.53px;top:469.0px;font-size:28px;color:#b1b8c3;letter-spacing:0.502px">distributions</span>
<span id="t76" class="t" style="left:2276.53px;top:469.0px;font-size:28px;color:#b1b8c3;letter-spacing:0.094px">between</span>
<span id="t77" class="t" style="left:2390.10px;top:469.0px;font-size:28px;color:#b1b8c3;letter-spacing:-0.546px">the</span>
<span id="t78" class="t" style="left:2435.90px;top:469.0px;font-size:28px;color:#b1b8c3;letter-spacing:0.099px">training</span>
<span id="t79" class="t" style="left:2535.91px;top:469.0px;font-size:28px;color:#b1b8c3;letter-spacing:-0.398px">and</span>
<span id="t80" class="t" style="left:2589.48px;top:469.0px;font-size:28px;color:#b1b8c3;letter-spacing:0.379px">scoring</span>
<span id="t81" class="t" style="left:2688.48px;top:469.0px;font-size:28px;color:#b1b8c3;letter-spacing:0.224px">periods.</span>
</p>
<span id="t82" class="t" style="left:1901.50px;top:524.0px;font-size:26px;color:#b1b8c3;letter-spacing:-0.588px">Training</span>
<span id="t83" class="t" style="left:2026.10px;top:524.0px;font-size:26px;color:#b1b8c3;letter-spacing:-0.294px">Scoring</span>
<h2 class="ln" id="ln-h2c">
<span id="t84" class="t" style="left:428.34px;top:1550.3px;font-size:32px;color:#eeeff1;letter-spacing:-0.486px;font-weight:700">Drift</span>
<span id="t85" class="t" style="left:501.29px;top:1550.3px;font-size:32px;color:#eeeff1;letter-spacing:-1.659px;font-weight:700">Over</span>
<span id="t86" class="t" style="left:577.58px;top:1550.3px;font-size:32px;color:#eeeff1;letter-spacing:-0.974px;font-weight:700">Batch</span>
</h2>
<p class="ln" id="ln-d3">
<span id="t87" class="t" style="left:427.58px;top:1630.6px;font-size:28px;color:#b1b8c3;letter-spacing:-0.989px">Data</span>
<span id="t88" class="t" style="left:492.91px;top:1630.6px;font-size:28px;color:#b1b8c3;letter-spacing:0.700px">drift</span>
<span id="t89" class="t" style="left:550.91px;top:1630.6px;font-size:28px;color:#b1b8c3;letter-spacing:-0.564px">(<b>PSI</b>)</span>
<span id="t90" class="t" style="left:620.53px;top:1630.6px;font-size:28px;color:#b1b8c3;letter-spacing:0.120px">of</span>
<span id="t91" class="t" style="left:653.20px;top:1630.6px;font-size:28px;color:#b1b8c3;letter-spacing:0.059px">the</span>
<span id="t92" class="t" style="left:699.20px;top:1630.6px;font-size:28px;color:#b1b8c3;letter-spacing:-0.082px">feature</span>
<span id="t93" class="t" style="left:793.34px;top:1630.6px;font-size:28px;color:#b1b8c3;letter-spacing:-0.538px">(<b>readmitted</b>)</span>
<span id="t94" class="t" style="left:956.29px;top:1630.6px;font-size:28px;color:#b1b8c3;letter-spacing:-0.692px">over</span>
<span id="t95" class="t" style="left:1018.40px;top:1630.6px;font-size:28px;color:#b1b8c3;letter-spacing:-0.030px">selected</span>
<span id="t96" class="t" style="left:1128.48px;top:1630.6px;font-size:28px;color:#b1b8c3;letter-spacing:0.219px">batches.</span>
</p>
</main>
</body>
</html>
